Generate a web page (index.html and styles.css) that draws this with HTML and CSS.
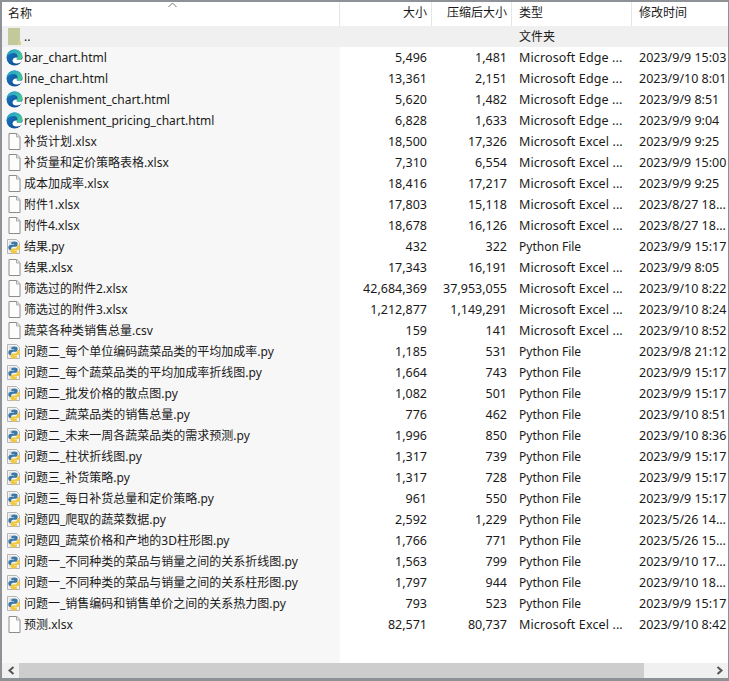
FILE: index.html
```html
<!DOCTYPE html>
<html lang="zh-CN">
<head>
<meta charset="utf-8">
<title>文件列表</title>
<link rel="stylesheet" href="styles.css">
</head>
<body>
<svg class="defs" width="0" height="0">
  <defs>
    <linearGradient id="edgeTop" x1="0" y1="0" x2="1" y2="1"><stop offset="0" stop-color="#1f9fd6"/><stop offset="1" stop-color="#4fd08a"/></linearGradient>
    <linearGradient id="edgeLow" x1="0" y1="0" x2="1" y2="1"><stop offset="0" stop-color="#1a7fc8"/><stop offset="1" stop-color="#0a3f88"/></linearGradient>
    <symbol id="i-edge" viewBox="0 0 17 17">
      <circle cx="8.5" cy="8.5" r="8" fill="url(#edgeLow)"/>
      <path d="M.6 7.6C1.2 3.400 4.400.5 8.500.5c4.400 0 8 3 8 6.800 0 2.400-2 3.600-3.900 3.600-1.300 0-2.200-.4-2.600-.9.8-.5 1.400-1.200 1.400-2.200C11.800 5.700 10 4 7.600 4 4.300 4 1.800 5.300.6 7.600z" fill="url(#edgeTop)"/>
      <path d="M11 8.500C8.500 8 6.500 9.500 6.500 11.500c0 2 2 3.200 4.200 3 2-.1 3.800-.9 5.100-2.300l1.200-2-4.500.8C11 11 10 10.300 11 8.500z" fill="#fff"/>
    </symbol>
    <symbol id="i-file" viewBox="0 0 14 17">
      <path d="M1.500.5h7.800l3.200 3.200v12.800h-11z" fill="#fdfdfd" stroke="#8c8c8c"/>
      <path d="M9 .8v3.200h3.200" fill="#eee" stroke="#a8a8a8"/>
    </symbol>
    <symbol id="i-py" viewBox="0 0 17 17">
      <path d="M1.500 1.500h9l3 3v11h-12z" fill="#f4f4f4" stroke="#b5b5b5"/>
      <path d="M3 4h4M3 6h2M3 13h3" stroke="#c8c8c8"/>
      <path d="M8 3.500c-2 0-2.700.7-2.700 1.800v1.300h2.900v.5H4.300c-1.300 0-2 .9-2 2.500s.7 2.500 1.800 2.500h1.100V10.700c0-1.100.9-2 2-2h2.700c1 0 1.700-.8 1.700-1.700V5.300c0-1.100-1-1.800-2.900-1.800z" fill="#3b78a8"/>
      <path d="M8.300 15.500c2 0 2.700-.7 2.700-1.800v-1.300H8.100v-.5H12c1.300 0 2-.9 2-2.500s-.7-2.500-1.800-2.500h-1.100v1.500c0 1.100-.9 2-2 2H6.400c-1 0-1.700.8-1.700 1.700v1.100c0 1.300 1.600 2.300 3.600 2.300z" fill="#f2c83c"/>
    </symbol>
    <symbol id="i-folder" viewBox="0 0 13 17">
      <path d="M0 0h12v13l-1 .5V17H0z" fill="#c4c99c"/>
      <path d="M10 17v-3l3-1v4z" fill="#d8d18a"/>
    </symbol>
  </defs>
</svg>
<main class="window">
  <div class="row head">
    <div class="name">名称<svg class="sort" width="9" height="6" viewBox="0 0 9 6"><path d="M.5 5 4.500 1l4 4" fill="none" stroke="#777"/></svg></div>
    <div class="num">大小</div>
    <div class="num">压缩后大小</div>
    <div class="txt cjk">类型</div>
    <div class="txt cjk">修改时间</div>
  </div>
  <div class="list">
    <div class="row parent"><div class="name"><svg class="ic"><use href="#i-folder"/></svg><span>..</span></div><div class="num"></div><div class="num"></div><div class="txt cjk">文件夹</div><div class="txt"></div></div>
    <div class="row"><div class="name"><svg class="ic"><use href="#i-edge"/></svg><span>bar_chart.html</span></div><div class="num">5,496</div><div class="num">1,481</div><div class="txt ms">Microsoft Edge ...</div><div class="txt">2023/9/9 15:03</div></div>
    <div class="row"><div class="name"><svg class="ic"><use href="#i-edge"/></svg><span>line_chart.html</span></div><div class="num">13,361</div><div class="num">2,151</div><div class="txt ms">Microsoft Edge ...</div><div class="txt">2023/9/10 8:01</div></div>
    <div class="row"><div class="name"><svg class="ic"><use href="#i-edge"/></svg><span>replenishment_chart.html</span></div><div class="num">5,620</div><div class="num">1,482</div><div class="txt ms">Microsoft Edge ...</div><div class="txt">2023/9/9 8:51</div></div>
    <div class="row"><div class="name"><svg class="ic"><use href="#i-edge"/></svg><span>replenishment_pricing_chart.html</span></div><div class="num">6,828</div><div class="num">1,633</div><div class="txt ms">Microsoft Edge ...</div><div class="txt">2023/9/9 9:04</div></div>
    <div class="row"><div class="name"><svg class="ic"><use href="#i-file"/></svg><span>补货计划.xlsx</span></div><div class="num">18,500</div><div class="num">17,326</div><div class="txt ms">Microsoft Excel ...</div><div class="txt">2023/9/9 9:25</div></div>
    <div class="row"><div class="name"><svg class="ic"><use href="#i-file"/></svg><span>补货量和定价策略表格.xlsx</span></div><div class="num">7,310</div><div class="num">6,554</div><div class="txt ms">Microsoft Excel ...</div><div class="txt">2023/9/9 15:00</div></div>
    <div class="row"><div class="name"><svg class="ic"><use href="#i-file"/></svg><span>成本加成率.xlsx</span></div><div class="num">18,416</div><div class="num">17,217</div><div class="txt ms">Microsoft Excel ...</div><div class="txt">2023/9/9 9:25</div></div>
    <div class="row"><div class="name"><svg class="ic"><use href="#i-file"/></svg><span>附件1.xlsx</span></div><div class="num">17,803</div><div class="num">15,118</div><div class="txt ms">Microsoft Excel ...</div><div class="txt">2023/8/27 18...</div></div>
    <div class="row"><div class="name"><svg class="ic"><use href="#i-file"/></svg><span>附件4.xlsx</span></div><div class="num">18,678</div><div class="num">16,126</div><div class="txt ms">Microsoft Excel ...</div><div class="txt">2023/8/27 18...</div></div>
    <div class="row"><div class="name"><svg class="ic"><use href="#i-py"/></svg><span>结果.py</span></div><div class="num">432</div><div class="num">322</div><div class="txt pf">Python File</div><div class="txt">2023/9/9 15:17</div></div>
    <div class="row"><div class="name"><svg class="ic"><use href="#i-file"/></svg><span>结果.xlsx</span></div><div class="num">17,343</div><div class="num">16,191</div><div class="txt ms">Microsoft Excel ...</div><div class="txt">2023/9/9 8:05</div></div>
    <div class="row"><div class="name"><svg class="ic"><use href="#i-file"/></svg><span>筛选过的附件2.xlsx</span></div><div class="num">42,684,369</div><div class="num">37,953,055</div><div class="txt ms">Microsoft Excel ...</div><div class="txt">2023/9/10 8:22</div></div>
    <div class="row"><div class="name"><svg class="ic"><use href="#i-file"/></svg><span>筛选过的附件3.xlsx</span></div><div class="num">1,212,877</div><div class="num">1,149,291</div><div class="txt ms">Microsoft Excel ...</div><div class="txt">2023/9/10 8:24</div></div>
    <div class="row"><div class="name"><svg class="ic"><use href="#i-file"/></svg><span>蔬菜各种类销售总量.csv</span></div><div class="num">159</div><div class="num">141</div><div class="txt ms">Microsoft Excel ...</div><div class="txt">2023/9/10 8:52</div></div>
    <div class="row"><div class="name"><svg class="ic"><use href="#i-py"/></svg><span>问题二_每个单位编码蔬菜品类的平均加成率.py</span></div><div class="num">1,185</div><div class="num">531</div><div class="txt pf">Python File</div><div class="txt">2023/9/8 21:12</div></div>
    <div class="row"><div class="name"><svg class="ic"><use href="#i-py"/></svg><span>问题二_每个蔬菜品类的平均加成率折线图.py</span></div><div class="num">1,664</div><div class="num">743</div><div class="txt pf">Python File</div><div class="txt">2023/9/9 15:17</div></div>
    <div class="row"><div class="name"><svg class="ic"><use href="#i-py"/></svg><span>问题二_批发价格的散点图.py</span></div><div class="num">1,082</div><div class="num">501</div><div class="txt pf">Python File</div><div class="txt">2023/9/9 15:17</div></div>
    <div class="row"><div class="name"><svg class="ic"><use href="#i-py"/></svg><span>问题二_蔬菜品类的销售总量.py</span></div><div class="num">776</div><div class="num">462</div><div class="txt pf">Python File</div><div class="txt">2023/9/10 8:51</div></div>
    <div class="row"><div class="name"><svg class="ic"><use href="#i-py"/></svg><span>问题二_未来一周各蔬菜品类的需求预测.py</span></div><div class="num">1,996</div><div class="num">850</div><div class="txt pf">Python File</div><div class="txt">2023/9/10 8:36</div></div>
    <div class="row"><div class="name"><svg class="ic"><use href="#i-py"/></svg><span>问题二_柱状折线图.py</span></div><div class="num">1,317</div><div class="num">739</div><div class="txt pf">Python File</div><div class="txt">2023/9/9 15:17</div></div>
    <div class="row"><div class="name"><svg class="ic"><use href="#i-py"/></svg><span>问题三_补货策略.py</span></div><div class="num">1,317</div><div class="num">728</div><div class="txt pf">Python File</div><div class="txt">2023/9/9 15:17</div></div>
    <div class="row"><div class="name"><svg class="ic"><use href="#i-py"/></svg><span>问题三_每日补货总量和定价策略.py</span></div><div class="num">961</div><div class="num">550</div><div class="txt pf">Python File</div><div class="txt">2023/9/9 15:17</div></div>
    <div class="row"><div class="name"><svg class="ic"><use href="#i-py"/></svg><span>问题四_爬取的蔬菜数据.py</span></div><div class="num">2,592</div><div class="num">1,229</div><div class="txt pf">Python File</div><div class="txt">2023/5/26 14...</div></div>
    <div class="row"><div class="name"><svg class="ic"><use href="#i-py"/></svg><span>问题四_蔬菜价格和产地的3D柱形图.py</span></div><div class="num">1,766</div><div class="num">771</div><div class="txt pf">Python File</div><div class="txt">2023/5/26 15...</div></div>
    <div class="row"><div class="name"><svg class="ic"><use href="#i-py"/></svg><span>问题一_不同种类的菜品与销量之间的关系折线图.py</span></div><div class="num">1,563</div><div class="num">799</div><div class="txt pf">Python File</div><div class="txt">2023/9/10 17...</div></div>
    <div class="row"><div class="name"><svg class="ic"><use href="#i-py"/></svg><span>问题一_不同种类的菜品与销量之间的关系柱形图.py</span></div><div class="num">1,797</div><div class="num">944</div><div class="txt pf">Python File</div><div class="txt">2023/9/10 18...</div></div>
    <div class="row"><div class="name"><svg class="ic"><use href="#i-py"/></svg><span>问题一_销售编码和销售单价之间的关系热力图.py</span></div><div class="num">793</div><div class="num">523</div><div class="txt pf">Python File</div><div class="txt">2023/9/9 15:17</div></div>
    <div class="row"><div class="name"><svg class="ic"><use href="#i-file"/></svg><span>预测.xlsx</span></div><div class="num">82,571</div><div class="num">80,737</div><div class="txt ms">Microsoft Excel ...</div><div class="txt">2023/9/10 8:42</div></div>
    <div class="filler"><div class="filler-name"></div></div>
  </div>
  <div class="scrollbar">
    <div class="arrow"><svg width="8" height="9" viewBox="0 0 8 9"><path d="M6.500 1 2.500 4.500l4 3.500" fill="none" stroke="#555" stroke-width="2"/></svg></div>
    <div class="thumb"></div>
    <div class="track"></div>
    <div class="arrow"><svg width="8" height="9" viewBox="0 0 8 9"><path d="M1.500 1l4 3.500-4 3.500" fill="none" stroke="#555" stroke-width="2"/></svg></div>
  </div>
</main>
</body>
</html>
```
FILE: styles.css
```css
* { box-sizing: border-box; }
html, body { margin: 0; padding: 0; }
body {
  width: 729px;
  height: 681px;
  overflow: hidden;
  background: #fff;
  font-family: "Noto Sans", "Noto Sans CJK SC", sans-serif;
  font-size: 12.5px;
  color: #1a1a1a;
}
.defs { position: absolute; }
.window {
  width: 729px;
  height: 681px;
  display: flex;
  flex-direction: column;
  border-style: solid;
  border-color: #8e9196;
  border-width: 2px 1px 3px 2px;
}
.row {
  display: grid;
  grid-template-columns: 338px 92px 80px 120px 1fr;
  height: 21px;
  line-height: 21px;
  white-space: nowrap;
}
.row > div { overflow: hidden; }
.name { display: flex; align-items: center; background: #f7f7f7; padding-left: 4px; gap: 1px; font-size: 12px; }
.num { text-align: right; padding-right: 5px; }
.txt { padding-left: 7px; }
.cjk, .pf { font-size: 12px; }
.ms { letter-spacing: 0.12px; }
.head { height: 24px; line-height: 22px; font-size: 12px; }
.head > div { background: #fff; border-right: 1px solid #e5e5e5; }
.head > div:last-child { border-right: 0; }
.head .name { padding-left: 6px; position: relative; }
.head .num { padding-right: 4px; }
.head .txt { padding-left: 7px; }
.sort { position: absolute; left: 166px; top: 0; }
.parent { background: #f0f0f0; }
.parent .name { background: #f0f0f0; }
.ic { width: 17px; height: 17px; flex: none; }
.list { flex: 1; display: flex; flex-direction: column; }
.filler { flex: 1; }
.filler-name { width: 338px; height: 100%; background: #f7f7f7; }
.scrollbar { height: 15px; display: flex; background: #f0f0f0; }
.arrow { width: 17px; display: flex; align-items: center; justify-content: center; flex: none; }
.thumb { width: 625px; background: #cdcdcd; flex: none; }
.track { flex: 1; }
```
